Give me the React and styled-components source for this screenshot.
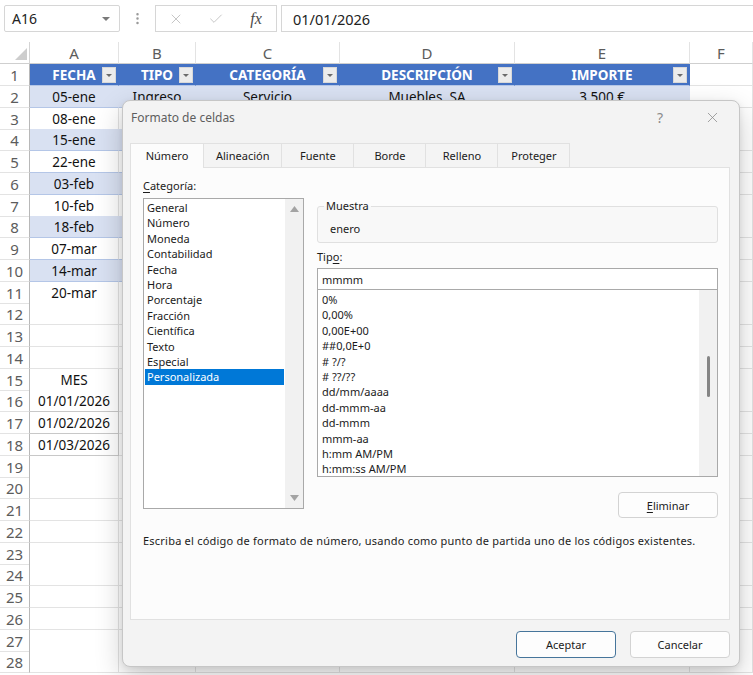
import React from "react";
import styled, { createGlobalStyle } from "styled-components";
import { X, Check, EllipsisVertical } from "lucide-react";

const GlobalStyle = createGlobalStyle`
  body {
    margin: 0;
    background: #fff;
  }
  * {
    box-sizing: border-box;
  }
`;

const COLS = "30px 89px 77px 144px 175px 175px 1fr";

const Screen = styled.div`
  position: relative;
  width: 753px;
  height: 675px;
  overflow: hidden;
  background: #fff;
  font-family: "Noto Sans", sans-serif;
`;

/* ---------- formula bar ---------- */
const TopBar = styled.div`
  display: flex;
  align-items: flex-start;
  height: 38px;
  padding: 5px 0 0 4px;
`;

const NameBox = styled.div`
  width: 116px;
  height: 27px;
  border: 1px solid #d6d6d6;
  border-radius: 2px;
  display: flex;
  align-items: center;
  justify-content: space-between;
  padding: 0 9px 0 7px;
  font-size: 14px;
  color: #222;
`;

const Caret = styled.span`
  width: 0;
  height: 0;
  border-left: 4px solid transparent;
  border-right: 4px solid transparent;
  border-top: 4px solid #7a7a7a;
`;

const Dots = styled.div`
  width: 35px;
  height: 27px;
  display: flex;
  align-items: center;
  justify-content: center;
  color: #9a9a9a;
`;

const FxBox = styled.div`
  width: 122px;
  height: 27px;
  border: 1px solid #d6d6d6;
  display: grid;
  grid-template-columns: 39px 41px 1fr;
  align-items: center;
  justify-items: center;
  color: #c2c2c2;
`;

const Fx = styled.span`
  font-family: "Liberation Serif", serif;
  font-style: italic;
  font-size: 16px;
  color: #4a4a4a;
`;

const FormulaInput = styled.div`
  flex: 1;
  margin-left: 4px;
  height: 27px;
  border: 1px solid #d6d6d6;
  border-right: none;
  display: flex;
  align-items: center;
  padding-left: 11px;
  font-size: 14.5px;
  color: #222;
`;

/* ---------- sheet ---------- */
const Sheet = styled.div`
  margin-top: 4px;
`;

const SheetRow = styled.div`
  display: grid;
  grid-template-columns: ${COLS};
  height: ${(p) => p.$h || "21.75px"};
`;

const Corner = styled.div`
  display: flex;
  align-items: flex-end;
  justify-content: flex-end;
  padding: 0 2px 3px 0;
  border-right: 1px solid #d4d4d4;
  border-bottom: 1px solid #cfcfcf;
`;

const ColHead = styled.div`
  display: flex;
  align-items: center;
  justify-content: center;
  font-size: 15px;
  color: #5c5c5c;
  border-right: 1px solid #e3e3e3;
  border-bottom: 1px solid #cfcfcf;
`;

const RowHead = styled.div`
  display: flex;
  align-items: center;
  justify-content: center;
  padding-top: 1px;
  font-size: 15px;
  color: #5c5c5c;
  border-right: 1px solid #b8b8b8;
  border-bottom: 1px solid #e3e3e3;
`;

const toneBg = {
  head: "#4472c4",
  band: "#d9e1f2",
  plain: "#ffffff",
};

const Cell = styled.div`
  position: relative;
  display: flex;
  align-items: center;
  justify-content: center;
  padding-top: 1px;
  overflow: hidden;
  white-space: nowrap;
  font-size: 13.5px;
  font-weight: ${(p) => (p.$tone === "head" ? 700 : 400)};
  color: ${(p) => (p.$tone === "head" ? "#fff" : "#111")};
  background: ${(p) => toneBg[p.$tone] || "#fff"};
  border-right: 1px solid
    ${(p) => (p.$tone === "head" ? "#4472c4" : p.$tone === "band" ? "#d9e1f2" : p.$boxed ? "#c8c8c8" : "#e3e3e3")};
  border-bottom: 1px solid
    ${(p) => (p.$tone ? "#b4c6e7" : p.$boxed ? "#c8c8c8" : "#e3e3e3")};
`;

const FilterBtn = styled.span`
  position: absolute;
  right: 2px;
  top: 3px;
  width: 14px;
  height: 16px;
  background: #ececec;
  border: 1px solid #d8d8d8;
  display: flex;
  align-items: center;
  justify-content: center;
  &::after {
    content: "";
    border-left: 3px solid transparent;
    border-right: 3px solid transparent;
    border-top: 3px solid #6b6b6b;
  }
`;

/* ---------- dialog ---------- */
const Dialog = styled.div`
  position: absolute;
  left: 122px;
  top: 100px;
  width: 618px;
  height: 567px;
  background: #f3f3f3;
  border: 1px solid #c6c6c6;
  border-radius: 8px;
  box-shadow: 0 10px 28px rgba(0, 0, 0, 0.2), 0 2px 6px rgba(0, 0, 0, 0.08);
  display: flex;
  flex-direction: column;
  font-size: 11px;
  color: #1b1b1b;
`;

const TitleBar = styled.div`
  height: 33px;
  display: flex;
  align-items: center;
  padding-left: 8px;
`;

const Title = styled.span`
  font-size: 12px;
  color: #5e5e5e;
`;

const TitleButtons = styled.div`
  margin-left: auto;
  margin-right: 7px;
  display: flex;
  gap: 12px;
`;

const TitleBtn = styled.span`
  width: 40px;
  height: 26px;
  display: flex;
  align-items: center;
  justify-content: center;
  font-size: 14px;
  color: #8a8a8a;
`;

const Body = styled.div`
  margin-top: 9px;
  padding: 0 9px 0 7px;
`;

const Tabs = styled.div`
  display: flex;
  height: 24px;
`;

const Tab = styled.div`
  position: relative;
  z-index: ${(p) => (p.$active ? 1 : 0)};
  min-width: 73px;
  height: ${(p) => (p.$active ? "25px" : "24px")};
  padding: 0 12px 1px;
  margin-left: -1px;
  display: flex;
  align-items: center;
  justify-content: center;
  border: 1px solid #e1e1e1;
  border-bottom: none;
  background: ${(p) => (p.$active ? "#fcfcfc" : "#f4f4f4")};
  &:first-child {
    margin-left: 0;
    min-width: 74px;
  }
`;

const Panel = styled.div`
  height: 453px;
  background: #fcfcfc;
  border: 1px solid #e1e1e1;
  padding: 10px 11px 0 12px;
`;

const PanelGrid = styled.div`
  display: grid;
  grid-template-columns: 161px 1fr;
  column-gap: 13px;
`;

const Column = styled.div`
  display: flex;
  flex-direction: column;
  padding-top: ${(p) => p.$pad || 0}px;
`;

const Label = styled.div`
  line-height: 16px;
  margin-bottom: ${(p) => p.$mb || 0}px;
  margin-top: ${(p) => p.$mt || 0}px;
  u {
    text-decoration-thickness: 1px;
    text-underline-offset: 2px;
  }
`;

const ListBox = styled.div`
  height: ${(p) => p.$h}px;
  margin-top: ${(p) => p.$mt || 0}px;
  border: 1px solid #a9a9a9;
  background: #fff;
  display: flex;
`;

const Items = styled.div`
  flex: 1;
  padding: ${(p) => p.$pt || 1}px 1px 0 1px;
`;

const Item = styled.div`
  height: 15.4px;
  line-height: 15.4px;
  padding-left: ${(p) => p.$pl || 2}px;
  white-space: nowrap;
  background: ${(p) => (p.$selected ? "#0078d7" : "transparent")};
  color: ${(p) => (p.$selected ? "#fff" : "#1b1b1b")};
`;

const ScrollTrack = styled.div`
  width: 18px;
  background: #f1f1f1;
  display: flex;
  flex-direction: column;
  align-items: center;
  justify-content: ${(p) => (p.$arrows ? "space-between" : "flex-start")};
  padding: ${(p) => (p.$arrows ? "7px 0 7px" : "0")};
`;

const Thumb = styled.div`
  width: 3px;
  height: 41px;
  margin-top: 66px;
  margin-left: 1px;
  border-radius: 2px;
  background: #858585;
`;

const Sample = styled.fieldset`
  margin: 0;
  height: 45px;
  border: 1px solid #e0e0e0;
  border-radius: 3px;
  background: #f8f8f8;
  padding: 0 12px 0 12px;
  legend {
    margin-left: -6px;
    padding: 0 2px;
    line-height: 16px;
    font-size: 11px;
  }
`;

const SampleText = styled.div`
  line-height: 16px;
  margin-top: 7px;
`;

const TypeInput = styled.div`
  height: 22px;
  margin-top: 3px;
  border: 1px solid #a9a9a9;
  background: #fff;
  display: flex;
  align-items: center;
  padding-left: 4px;
`;

const Button = styled.div`
  width: ${(p) => p.$w || 100}px;
  height: ${(p) => p.$h || 27}px;
  display: flex;
  align-items: center;
  justify-content: center;
  background: #fdfdfd;
  border: 1px solid ${(p) => (p.$primary ? "#46759b" : "#d3d3d3")};
  border-radius: 4px;
  align-self: ${(p) => (p.$right ? "flex-end" : "auto")};
  margin-top: ${(p) => p.$mt || 0}px;
  u {
    text-decoration-thickness: 1px;
    text-underline-offset: 2px;
  }
`;

const Hint = styled.div`
  margin-top: 15px;
  line-height: 16px;
  letter-spacing: 0.22px;
  white-space: nowrap;
`;

const Footer = styled.div`
  display: flex;
  justify-content: flex-end;
  gap: 14px;
  padding: 11px 9px 0 0;
`;

function Arrow({ down }) {
  return (
    <svg width="9" height="6" viewBox="0 0 9 6">
      <polygon points={down ? "0,0 9,0 4.5,6" : "0,6 9,6 4.5,0"} fill="#a3a3a3" />
    </svg>
  );
}

// only the first data row shows above the dialog; the rest of the table is covered
const tableRows = [
  ["05-ene", "Ingreso", "Servicio", "Muebles, SA", "3.500 €"],
  ["08-ene"],
  ["15-ene"],
  ["22-ene"],
  ["03-feb"],
  ["10-feb"],
  ["18-feb"],
  ["07-mar"],
  ["14-mar"],
  ["20-mar"],
];

const headers = ["FECHA", "TIPO", "CATEGORÍA", "DESCRIPCIÓN", "IMPORTE"];

const extraA = { 15: "MES", 16: "01/01/2026", 17: "01/02/2026", 18: "01/03/2026" };

const categories = [
  "General",
  "Número",
  "Moneda",
  "Contabilidad",
  "Fecha",
  "Hora",
  "Porcentaje",
  "Fracción",
  "Científica",
  "Texto",
  "Especial",
  "Personalizada",
];

const formats = [
  "0%",
  "0,00%",
  "0,00E+00",
  "##0,0E+0",
  "# ?/?",
  "# ??/??",
  "dd/mm/aaaa",
  "dd-mmm-aa",
  "dd-mmm",
  "mmm-aa",
  "h:mm AM/PM",
  "h:mm:ss AM/PM",
];

const tabs = ["Número", "Alineación", "Fuente", "Borde", "Relleno", "Proteger"];

function App() {
  const emptyRows = [];
  for (let n = 12; n <= 28; n++) emptyRows.push(n);

  return (
    <Screen>
      <GlobalStyle />
      <TopBar>
        <NameBox>
          A16
          <Caret />
        </NameBox>
        <Dots>
          <EllipsisVertical size={15} strokeWidth={2} />
        </Dots>
        <FxBox>
          <X size={16} strokeWidth={1.4} />
          <Check size={16} strokeWidth={1.4} />
          <Fx>fx</Fx>
        </FxBox>
        <FormulaInput>01/01/2026</FormulaInput>
      </TopBar>

      <Sheet>
        <SheetRow $h="22px">
          <Corner>
            <svg width="12" height="12" viewBox="0 0 12 12">
              <polygon points="12,0 12,12 0,12" fill="#cdcdcd" />
            </svg>
          </Corner>
          {["A", "B", "C", "D", "E", "F"].map((c) => (
            <ColHead key={c}>{c}</ColHead>
          ))}
        </SheetRow>

        <SheetRow>
          <RowHead>1</RowHead>
          {headers.map((h) => (
            <Cell key={h} $tone="head">
              {h}
              <FilterBtn />
            </Cell>
          ))}
          <Cell />
        </SheetRow>

        {tableRows.map((r, i) => (
          <SheetRow key={i}>
            <RowHead>{i + 2}</RowHead>
            {[0, 1, 2, 3, 4].map((j) => (
              <Cell key={j} $tone={i % 2 === 0 ? "band" : "plain"}>
                {r[j]}
              </Cell>
            ))}
            <Cell />
          </SheetRow>
        ))}

        {emptyRows.map((n) => (
          <SheetRow key={n}>
            <RowHead>{n}</RowHead>
            <Cell $boxed={!!extraA[n]}>{extraA[n]}</Cell>
            <Cell />
            <Cell />
            <Cell />
            <Cell />
            <Cell />
          </SheetRow>
        ))}
      </Sheet>

      <Dialog>
        <TitleBar>
          <Title>Formato de celdas</Title>
          <TitleButtons>
            <TitleBtn>?</TitleBtn>
            <TitleBtn>
              <X size={17} strokeWidth={1.1} />
            </TitleBtn>
          </TitleButtons>
        </TitleBar>

        <Body>
          <Tabs>
            {tabs.map((t, i) => (
              <Tab key={t} $active={i === 0}>
                {t}
              </Tab>
            ))}
          </Tabs>
          <Panel>
            <PanelGrid>
              <Column>
                <Label $mb={4}>
                  <u>C</u>ategoría:
                </Label>
                <ListBox $h={311}>
                  <Items>
                    {categories.map((c) => (
                      <Item key={c} $selected={c === "Personalizada"}>
                        {c}
                      </Item>
                    ))}
                  </Items>
                  <ScrollTrack $arrows>
                    <Arrow />
                    <Arrow down />
                  </ScrollTrack>
                </ListBox>
              </Column>

              <Column $pad={20}>
                <Sample>
                  <legend>Muestra</legend>
                  <SampleText>enero</SampleText>
                </Sample>
                <Label $mt={6}>
                  Tip<u>o</u>:
                </Label>
                <TypeInput>mmmm</TypeInput>
                <ListBox $h={188} $mt={-1}>
                  <Items $pt={2}>
                    {formats.map((f) => (
                      <Item key={f} $pl={3}>
                        {f}
                      </Item>
                    ))}
                  </Items>
                  <ScrollTrack>
                    <Thumb />
                  </ScrollTrack>
                </ListBox>
                <Button $right $mt={15} $h={26}>
                  <span>
                    <u>E</u>liminar
                  </span>
                </Button>
              </Column>
            </PanelGrid>
            <Hint>
              Escriba el código de formato de número, usando como punto de partida uno de los códigos
              existentes.
            </Hint>
          </Panel>
        </Body>

        <Footer>
          <Button $primary>Aceptar</Button>
          <Button>Cancelar</Button>
        </Footer>
      </Dialog>
    </Screen>
  );
}

export default App;
